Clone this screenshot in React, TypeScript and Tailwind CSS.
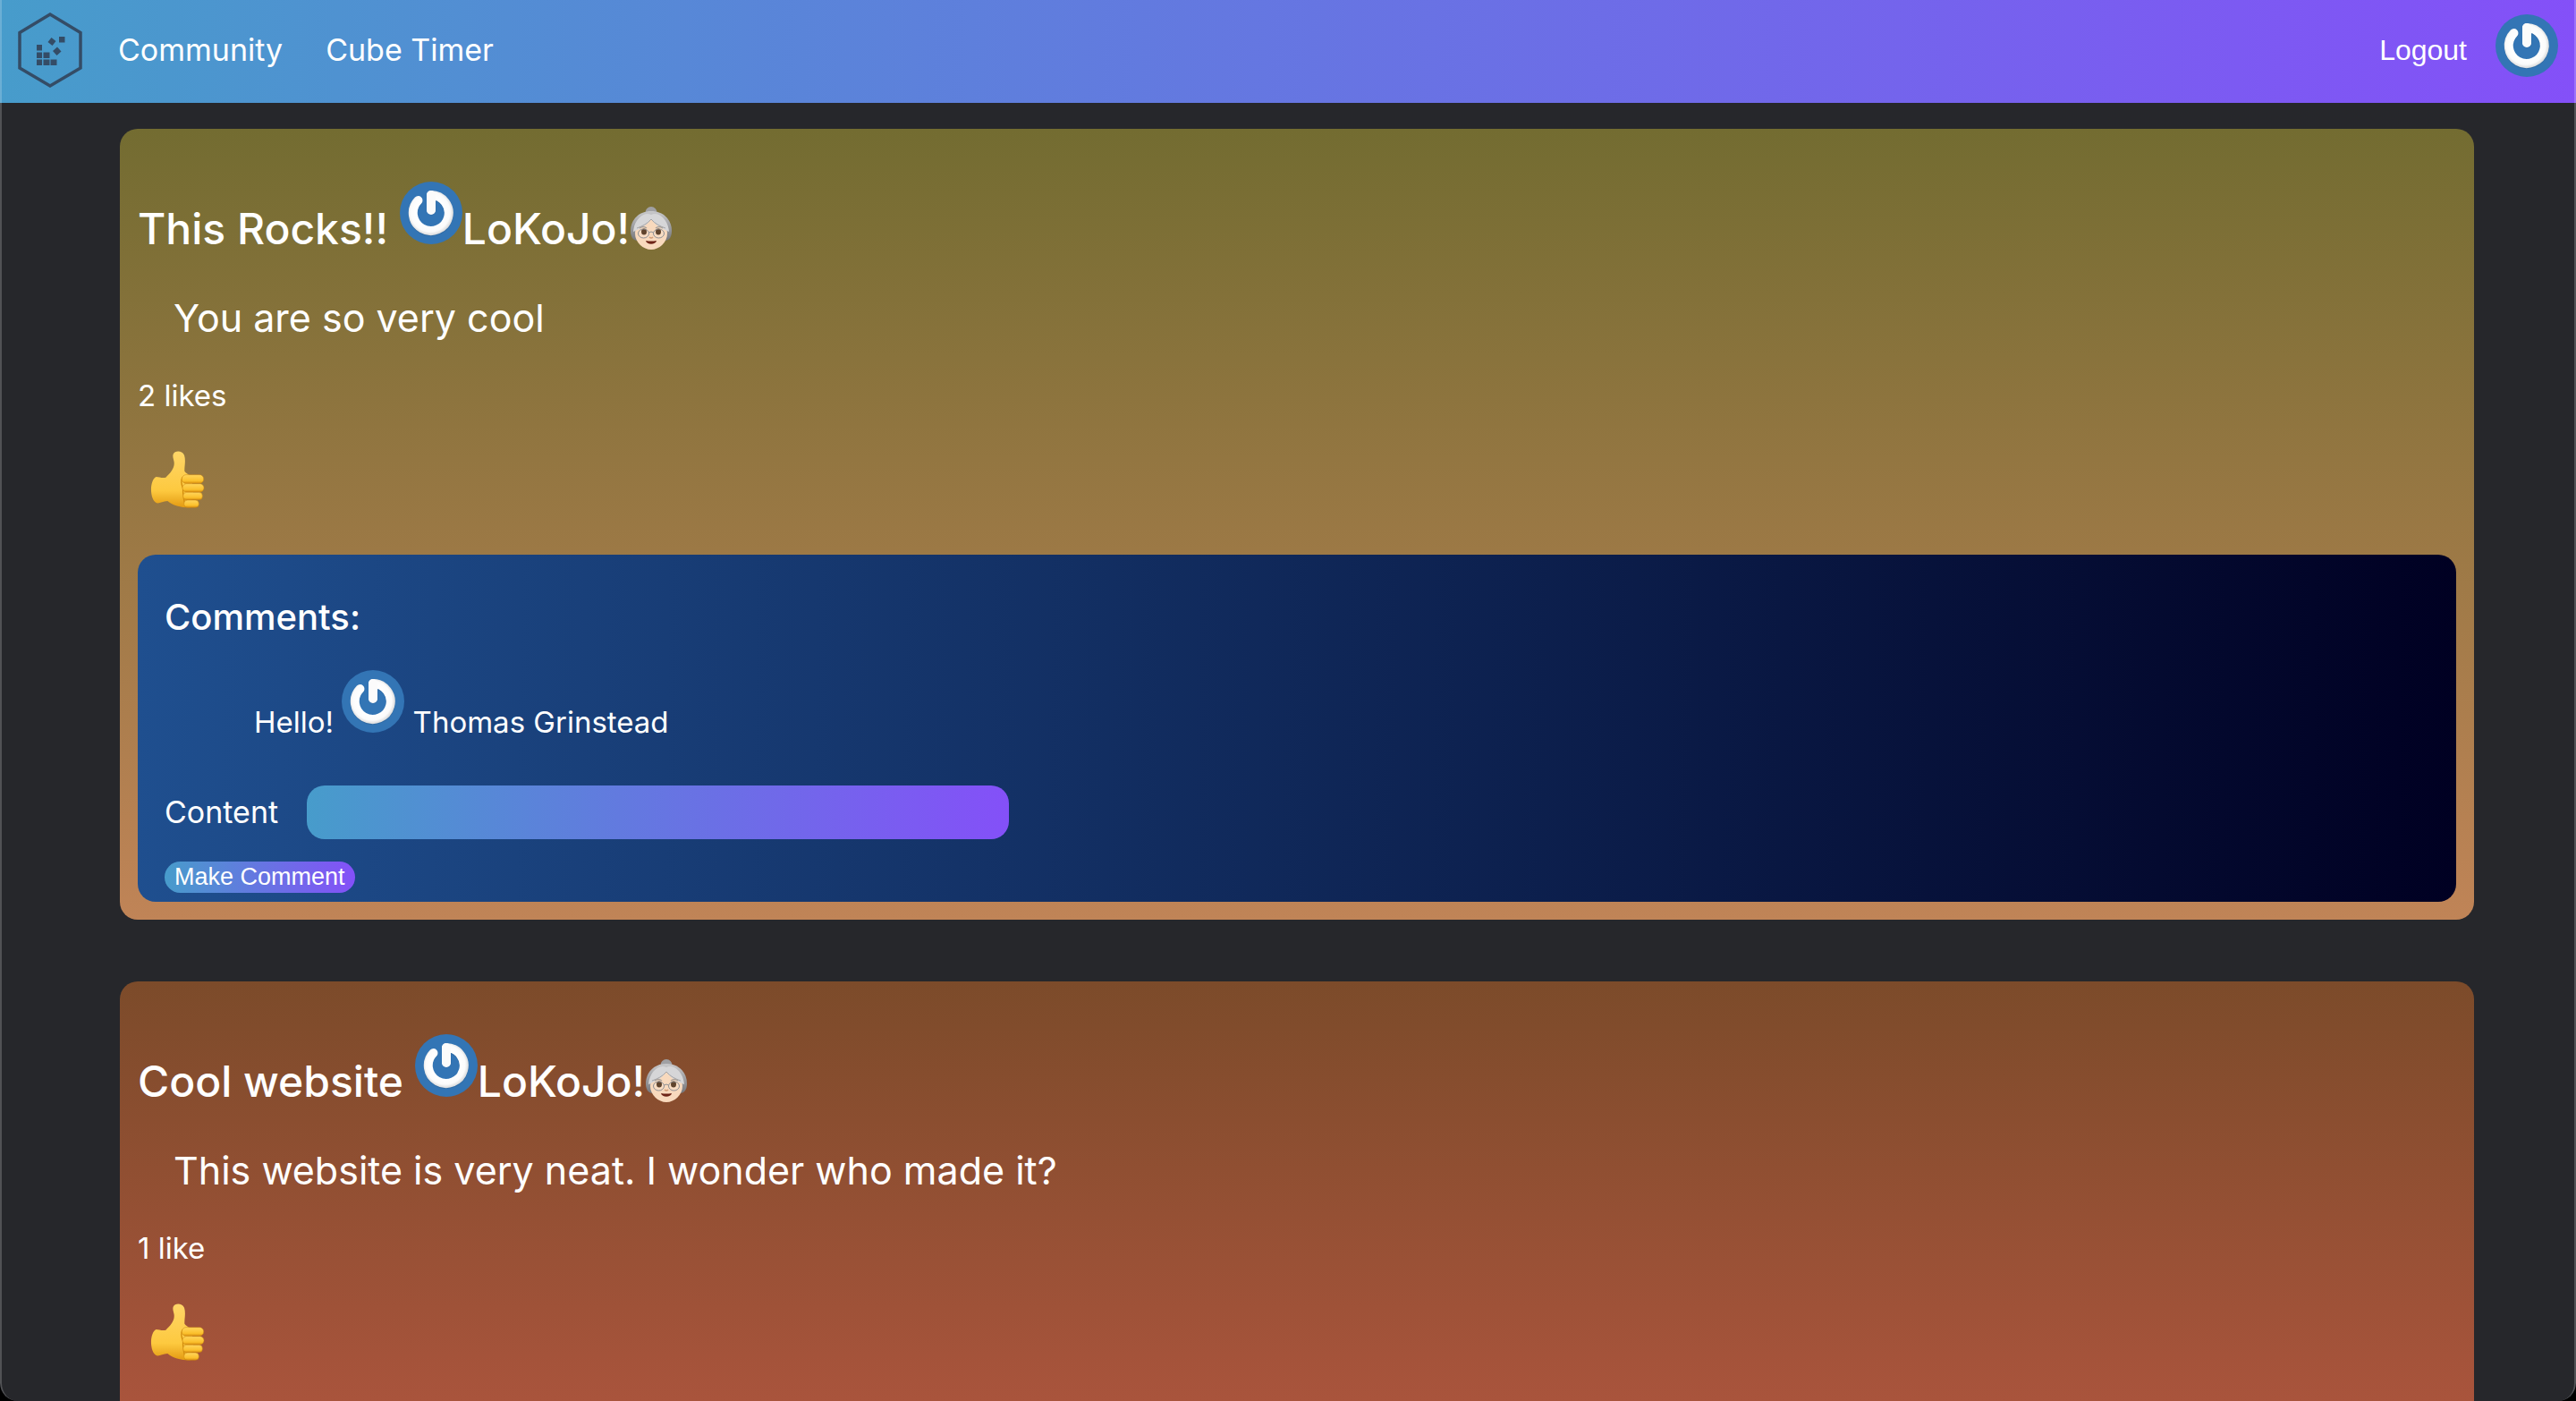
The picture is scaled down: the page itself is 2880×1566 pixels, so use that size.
import { useId } from "react";

function Logo() {
  return (
    <svg viewBox="0 0 74 84" className="h-[84px] w-[74px]" aria-hidden="true">
      <path d="M37 2 L71 22.500 V62 L37 82 L3 62 V22.500 Z" fill="none" stroke="#344c66" strokeWidth="3.500" />
      <g fill="#344c66">
        <rect x="22" y="36" width="6" height="6.500" />
        <rect x="22" y="44.500" width="6" height="6.500" />
        <rect x="29.500" y="44.500" width="7" height="6.500" />
        <rect x="22" y="52.500" width="6" height="6.500" />
        <rect x="29.500" y="52.500" width="7" height="6.500" />
        <rect x="37.500" y="52.500" width="7" height="6.500" />
        <rect x="47" y="27" width="6.500" height="6.500" />
        <path d="M38.500 28 L43.500 32 L39.500 37 L34.500 33 Z" />
        <path d="M45 38.500 L49.500 43.500 L44.500 48 L40 43 Z" />
      </g>
    </svg>
  );
}

function Avatar() {
  const id = useId();
  return (
    <svg viewBox="0 0 70 70" className="inline h-[70px] w-[70px] shrink-0 align-baseline" aria-hidden="true">
      <defs>
        <radialGradient id={id} gradientUnits="userSpaceOnUse" cx="34" cy="34" r="26">
          <stop offset="0.600" stopColor="#ffffff" />
          <stop offset="0.850" stopColor="#fbfbfb" />
          <stop offset="1" stopColor="#d9dadb" />
        </radialGradient>
      </defs>
      <circle cx="35" cy="35" r="35" fill="#3375b5" />
      <g fill="none" strokeLinecap="round" strokeLinejoin="round" strokeWidth="10">
        <path d="M35.500 32.500 V16 A20 20 0 1 1 21 21.500" stroke="#2a5f94" strokeOpacity="0.500" />
        <path d="M35 32 V15 A20 20 0 1 1 20.500 21" stroke={`url(#${id})`} />
        <path d="M35 31 V15" stroke="#fbfbfb" />
      </g>
    </svg>
  );
}

function Grandma() {
  const id = useId();
  return (
    <svg viewBox="0 0 48 48" className="inline h-12 w-12 align-[-6px]" role="img" aria-label="old woman">
      <defs>
        <linearGradient id={id} x1="0" y1="0" x2="0" y2="1">
          <stop offset="0" stopColor="#c9c9cb" />
          <stop offset="1" stopColor="#76777c" />
        </linearGradient>
      </defs>
      <circle cx="24" cy="6.500" r="6.500" fill="#a0a0a3" />
      <path d="M24 5 C9 5 1 16 1 27 C1 33 3 37 8 38 H40 C45 37 47 33 47 27 C47 16 39 5 24 5Z" fill={`url(#${id})`} />
      <path d="M24 14 C13 15 6 21 6 30 C6 40 15 48 24 48 C33 48 42 40 42 30 C42 21 35 15 24 14Z" fill="#f8d9bd" />
      <path d="M24 9 C16 5 5 14 4 28 C9 26 19 22 24 14 C29 22 39 26 44 28 C43 14 32 5 24 9Z" fill="#d6d6d8" />
      <path d="M24 14 C20 19 14 22 8 24" fill="none" stroke="#a5a5a8" />
      <path d="M24 14 C28 19 34 22 40 24" fill="none" stroke="#a5a5a8" />
      <ellipse cx="16" cy="28" rx="3" ry="3.500" fill="#4f2f16" />
      <ellipse cx="32" cy="28" rx="3" ry="3.500" fill="#4f2f16" />
      <path d="M11 24 Q15 21 19 24 M29 24 Q33 21 37 24" fill="none" stroke="#a8a09a" strokeWidth="1.500" />
      <g fill="#ffffff" fillOpacity="0.100" stroke="#8d8f94" strokeWidth="1">
        <ellipse cx="15.500" cy="30" rx="6" ry="5" />
        <ellipse cx="32.500" cy="30" rx="6" ry="5" />
        <path d="M21.500 29 Q24 27 26.500 29" />
      </g>
      <path d="M22 34 Q24 36 26 34" fill="none" stroke="#d39b76" strokeWidth="1.500" />
      <path d="M18 38 Q24 39 30 38 C29 43 19 43 18 38Z" fill="#6e2417" />
    </svg>
  );
}

function ThumbsUp() {
  const id = useId();
  return (
    <svg viewBox="116 310 183 192" className="h-16 w-[61px]" aria-hidden="true">
      <defs>
        <linearGradient id={id} x1="0" y1="0" x2="0" y2="1">
          <stop offset="0" stopColor="#ffd668" />
          <stop offset="0.700" stopColor="#fdc93f" />
          <stop offset="1" stopColor="#e39a12" />
        </linearGradient>
        <linearGradient id={`${id}f`} x1="0" y1="0" x2="0" y2="1">
          <stop offset="0" stopColor="#ffd55c" />
          <stop offset="0.700" stopColor="#fbc02c" />
          <stop offset="1" stopColor="#d98e10" />
        </linearGradient>
      </defs>
      <path
        d="M136 397 C145 398 158 402 168 399 C184 383 198 368 196 348 C195 338 190 330 193 321 C199 308 222 308 230 324 C236 343 230 362 231 378 C236 384 241 388 250 392 L262 440 L250 500 C215 500 192 493 174 478 C158 479 148 487 137 485 C113 474 113 407 136 397Z"
        fill={`url(#${id})`}
      />
      <path d="M224 398 C216 415 222 425 226 436 C224 450 228 465 230 480 L234 496" fill="none" stroke="#d28c0d" strokeWidth="4" />
      <g fill={`url(#${id}f)`} stroke="#c98510" strokeWidth="1.500">
        <rect x="222" y="390" width="73" height="29" rx="14" />
        <rect x="224" y="420" width="72" height="28" rx="14" />
        <rect x="226" y="449" width="65" height="25" rx="12" />
        <rect x="229" y="475" width="50" height="25" rx="12" />
      </g>
    </svg>
  );
}

type PostProps = {
  title: string;
  body: string;
  likes: string;
  className: string;
  children?: React.ReactNode;
};

function Post({ title, body, likes, className, children }: PostProps) {
  return (
    <article className={`px-5 pt-[59px] ${className}`}>
      <h2 className="text-[48px] leading-[60px] font-medium">
        {title} <Avatar />
        LoKoJo!
        <Grandma />
      </h2>
      <p className="mt-11 pl-10 text-[43px] leading-[50px]">{body}</p>
      <p className="mt-[42px] text-[33px] leading-10">{likes}</p>
      <button type="button" aria-label="Like" className="mt-[42px] ml-3.5 block">
        <ThumbsUp />
      </button>
      {children}
    </article>
  );
}

function Comments() {
  return (
    <section className="mt-[52px] rounded-[20px] bg-[linear-gradient(91deg,#1f4f8f,#000022)] px-[30px] pt-[46px] pb-2.5">
      <h3 className="text-[40px] leading-[48px] font-medium">Comments:</h3>
      <p className="mt-[35px] pl-[100px] text-[33px] leading-10">
        Hello! <Avatar /> Thomas Grinstead
      </p>
      <form onSubmit={(e) => e.preventDefault()}>
        <div className="mt-[51px] flex items-center gap-8">
          <label htmlFor="content" className="text-[34px] leading-10">
            Content
          </label>
          <input
            id="content"
            type="text"
            className="h-[60px] w-[785px] rounded-[20px] bg-[linear-gradient(91deg,#479ccb,#8450f8)] px-4 text-[34px] outline-none"
          />
        </div>
        <button
          type="submit"
          className="mt-[25px] block h-[35px] rounded-[20px] bg-[linear-gradient(91deg,#479ccb,#8450f8)] px-[11px] font-['Liberation_Sans',sans-serif] text-[27px] leading-[35px]"
        >
          Make Comment
        </button>
      </form>
    </section>
  );
}

export default function App() {
  return (
    <div className="bg-black">
      <div className="relative flex min-h-screen flex-col overflow-hidden rounded-b-[20px] bg-[#26272b] font-[Inter,sans-serif] text-white">
        <header className="flex h-[115px] items-center bg-[linear-gradient(91deg,#479ccb,#8450f8)] pr-5 pl-[19px]">
          <a href="#home" aria-label="Home" className="-mt-1">
            <Logo />
          </a>
          <nav className="-mt-1 ml-[39px] flex gap-12 text-[34px] leading-10">
            <a href="#community">Community</a>
            <a href="#timer">Cube Timer</a>
          </nav>
          <button type="button" className="-mt-1 ml-auto font-['Liberation_Sans',sans-serif] text-[32px] leading-10">
            Logout
          </button>
          <a href="#profile" aria-label="Profile" className="-mt-3.5 ml-8 flex">
            <Avatar />
          </a>
        </header>
        <main className="mt-[29px] mr-[114px] ml-[134px] flex grow flex-col gap-[69px]">
          <Post
            title="This Rocks!!"
            body="You are so very cool"
            likes="2 likes"
            className="rounded-[20px] bg-[linear-gradient(180deg,#736c31,#c08457)] pb-5"
          >
            <Comments />
          </Post>
          <Post
            title="Cool website"
            body="This website is very neat. I wonder who made it?"
            likes="1 like"
            className="grow rounded-t-[20px] bg-[linear-gradient(180deg,#7c4b2a,#a9543c)] pb-8"
          />
        </main>
        <div className="pointer-events-none absolute inset-0 rounded-b-[20px] border-x-2 border-white/20" />
      </div>
    </div>
  );
}
